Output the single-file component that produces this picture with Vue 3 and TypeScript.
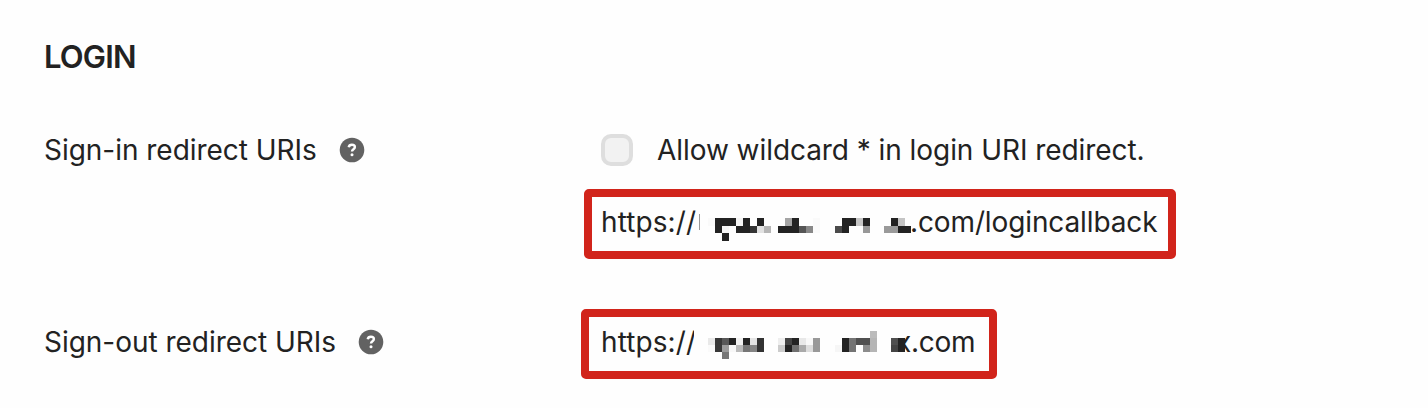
<script setup lang="ts">
interface Cell { x: number; y: number; w: number; h: number; fill: string }

// Each entry: column, row, shade
type Shade = [number, number, string]

const D = '#232323'

const signInShades: Shade[] = [
  [-1, 1, '#fafafa'], [0, 1, D], [1, 1, D], [2, 1, D], [3, 1, '#f4f4f4'], [4, 1, D], [6, 1, D], [10, 1, '#a5a5a5'], [11, 1, D],
  [0, 2, D], [1, 2, '#f8f8f8'], [3, 2, D], [4, 2, D], [5, 2, '#353535'], [6, 2, '#e2e2e2'], [7, 2, '#b6b6b6'],
  [9, 2, D], [10, 2, D], [11, 2, D], [12, 2, '#555555'], [13, 2, '#888888'], [14, 2, '#fafafa'], [14, 1, '#fafafa'],
  [1, 3, D],
  [18, 1, D], [19, 1, D], [20, 1, '#c6c6c6'], [21, 1, D],
  [17, 2, '#4b4b4b'], [18, 2, D], [21, 2, '#989898'],
  [25, 1, D], [26, 1, '#c4c4c4'],
  [24, 2, '#9a9a9a'], [25, 2, '#9a9a9a'], [26, 2, D], [27, 2, D],
]

const signOutShades: Shade[] = [
  [0, 1, '#e9e9e9'], [1, 1, '#383838'], [2, 1, '#585858'], [3, 1, D], [4, 1, '#f1f1f1'], [5, 1, D], [6, 1, '#e4e4e4'], [7, 1, '#333333'],
  [0, 2, '#fafafa'], [1, 2, '#383838'], [2, 2, '#9c9c9c'], [3, 2, '#f8f8f8'], [4, 2, '#bababa'], [5, 2, '#767676'], [6, 2, '#858585'], [7, 2, '#333333'],
  [2, 3, '#777777'],
  [10, 1, '#eeeeee'], [11, 1, '#444444'], [12, 1, D], [13, 1, '#e8e8e8'], [14, 1, '#f8f8f8'], [15, 1, '#999999'],
  [10, 2, '#cccccc'], [11, 2, D], [12, 2, '#707070'], [13, 2, '#aaaaaa'], [14, 2, '#dddddd'], [15, 2, '#999999'],
  [23, 0, '#bbbbbb'],
  [19, 1, D], [20, 1, '#747474'], [21, 1, '#505050'], [22, 1, '#505050'], [23, 1, '#b5b5b5'],
  [18, 2, '#f6f6f6'], [19, 2, D], [20, 2, '#747474'], [22, 2, '#8c8c8c'], [23, 2, '#b5b5b5'],
  [26, 1, '#505050'], [27, 1, D], [26, 2, '#444444'], [27, 2, D],
]

function toCells(shades: Shade[], left: number, edges: number[]): Cell[] {
  // Columns are slightly wider than 7px, so edges are rounded per column
  const edge = (c: number) => Math.round(left + c * 7.03)
  return shades.map(([c, r, fill]) => ({
    x: edge(c), y: edges[r], w: edge(c + 1) - edge(c), h: edges[r + 1] - edges[r], fill,
  }))
}

const signInCells = toCells(signInShades, 7, [10, 17, 25, 32, 40])
const signOutCells = toCells(signOutShades, 14, [10, 17, 24, 31, 38])
</script>

<template>
  <main class="panel">
    <h2 class="title">LOGIN</h2>

    <section class="row sign-in">
      <div class="label">
        <span>Sign-in redirect URIs</span>
        <svg class="help" viewBox="0 0 26 26">
          <circle cx="13" cy="13" r="12.3" fill="#626262" />
          <path d="M9.7 10.2C10 8.5 11.2 7.7 12.9 7.7c1.9 0 3 .9 3 2.4 0 2.3-2.9 2.1-2.9 4.5" fill="none" stroke="#fff" stroke-width="2.4" />
          <circle cx="13" cy="17.8" r="1.5" fill="#fff" />
        </svg>
      </div>
      <div class="value">
        <label class="check">
          <span class="box"></span>
          <span>Allow wildcard * in login URI redirect.</span>
        </label>
        <div class="uri uri-in">
          <span class="scheme">https://</span><span class="sliver"></span>
          <svg class="mosaic" width="203" height="41" shape-rendering="crispEdges">
            <rect v-for="(c, i) in signInCells" :key="i" :x="c.x" :y="c.y" :width="c.w" :height="c.h" :fill="c.fill" />
          </svg>
          <span class="path">.com/logincallback</span>
        </div>
      </div>
    </section>

    <section class="row sign-out">
      <div class="label">
        <span>Sign-out redirect URIs</span>
        <svg class="help" viewBox="0 0 26 26">
          <circle cx="13" cy="13" r="12.3" fill="#626262" />
          <path d="M9.7 10.2C10 8.5 11.2 7.7 12.9 7.7c1.9 0 3 .9 3 2.4 0 2.3-2.9 2.1-2.9 4.5" fill="none" stroke="#fff" stroke-width="2.4" />
          <circle cx="13" cy="17.8" r="1.5" fill="#fff" />
        </svg>
      </div>
      <div class="value">
        <div class="uri uri-out">
          <span class="scheme short">https://</span>
          <svg class="mosaic" width="211" height="41" shape-rendering="crispEdges">
            <rect v-for="(c, i) in signOutCells" :key="i" :x="c.x" :y="c.y" :width="c.w" :height="c.h" :fill="c.fill" />
          </svg>
          <span class="tail">x.com</span>
        </div>
      </div>
    </section>
  </main>
</template>

<style>
body { background: #fefefe; }
</style>

<style scoped>
.panel {
  box-sizing: border-box;
  width: 1428px;
  height: 408px;
  padding: 37px 0 0 44px;
  overflow: hidden;
  background: #fefefe;
  color: #222;
  font: 400 28px/34px Inter, "Liberation Sans", sans-serif;
  letter-spacing: -0.06px;
  white-space: nowrap;
}
.title {
  margin: 0;
  font-size: 31px;
  font-weight: 600;
  line-height: 40px;
  letter-spacing: -0.85px;
}
.row { display: flex; align-items: flex-start; }
.sign-in { margin-top: 56px; }
.sign-out { margin-top: 50px; }
.label { display: flex; align-items: center; width: 537px; height: 34px; gap: 22px; letter-spacing: -0.03px; }
.sign-out .label { margin-top: 16px; }
.help { width: 26px; height: 26px; }
.value { display: flex; flex-direction: column; align-items: flex-start; }
.check { display: flex; align-items: center; gap: 24px; height: 34px; padding-left: 20px; }
.box {
  box-sizing: border-box;
  width: 32px;
  height: 32px;
  border: 4px solid #dedede;
  border-radius: 10px;
  background: #f2f2f2;
}
.uri {
  box-sizing: border-box;
  display: flex;
  align-items: center;
  border: 8px solid #d1241b;
  border-radius: 5px;
  padding-left: 9px;
}
.uri-in { width: 592px; height: 70px; margin: 22px 0 0 3px; padding-bottom: 5px; }
.uri-out { width: 416px; height: 70px; padding-left: 12px; padding-bottom: 5px; }
.scheme { width: 98px; letter-spacing: 0.1px; }
.short { width: 93px; }
.sliver { width: 1px; height: 16px; background: #999; }
.mosaic { position: relative; z-index: 1; flex: none; margin-left: 8px; }
.uri-out .mosaic { margin-left: 0; background: #fefefe; }
.path { margin-left: -1px; letter-spacing: -0.12px; }
.tail { margin-left: -9px; letter-spacing: -0.3px; }
</style>
